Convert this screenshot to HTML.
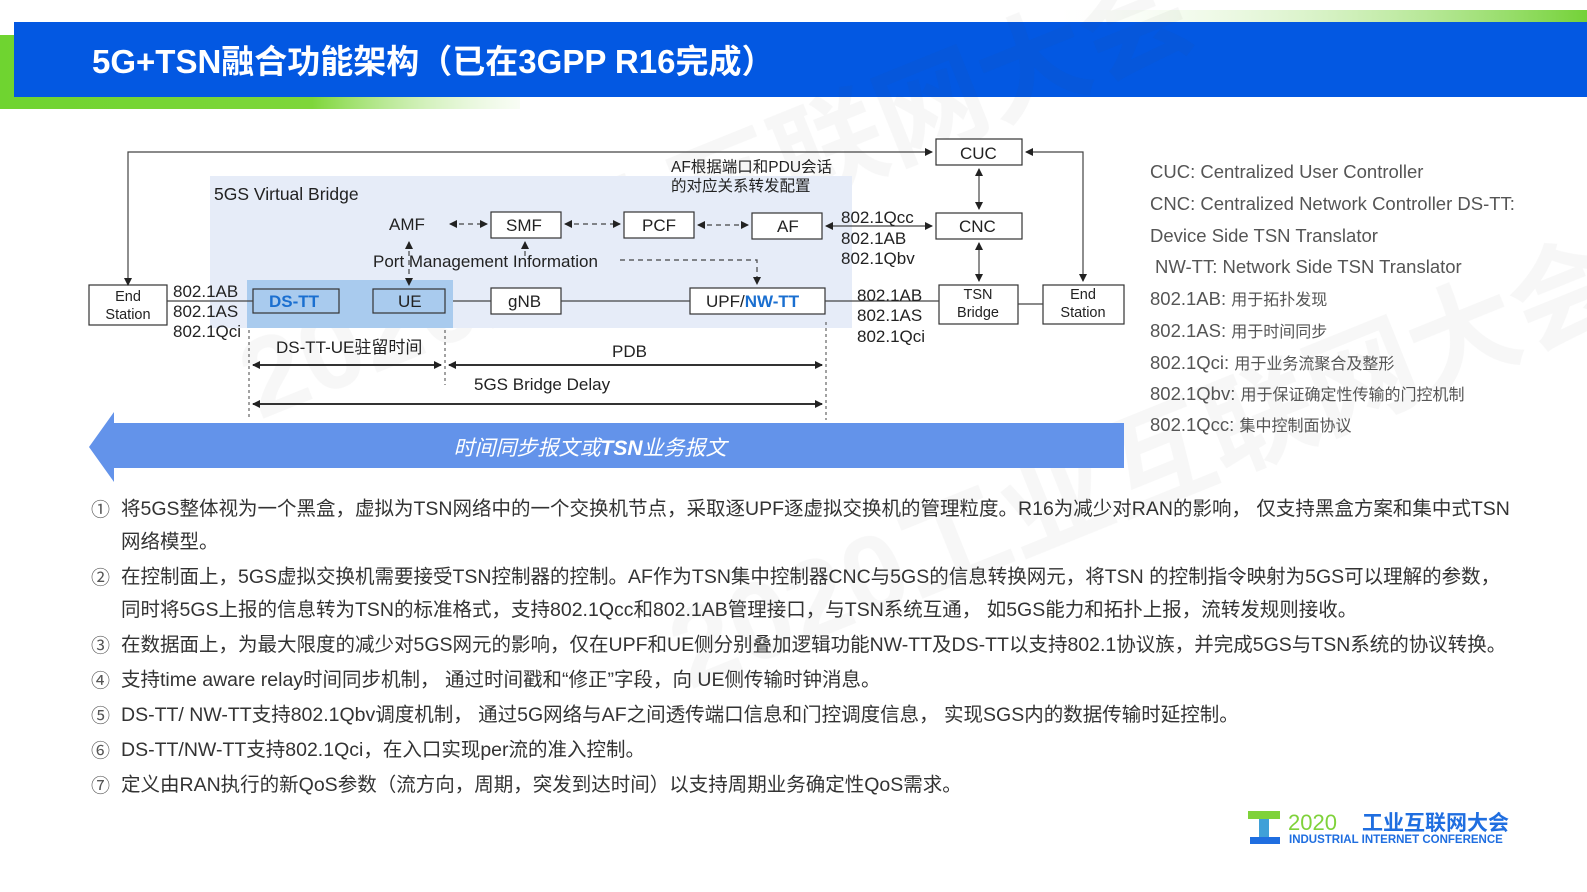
<!DOCTYPE html>
<html><head><meta charset="utf-8"><style>
html,body{margin:0;padding:0;background:#fff;width:1587px;height:892px;overflow:hidden}
svg{display:block}
text{font-family:"Liberation Sans","Noto Sans CJK SC",sans-serif}
</style></head><body>
<svg width="1587" height="892" viewBox="0 0 1587 892" xmlns="http://www.w3.org/2000/svg">
<defs>
<linearGradient id="g1" x1="0" x2="1"><stop offset="0" stop-color="#6fd430"/><stop offset="0.6" stop-color="#7ed63a"/><stop offset="1" stop-color="#e8f7dc" stop-opacity="0.3"/></linearGradient>
<linearGradient id="g2" x1="0" x2="1"><stop offset="0" stop-color="#e8f7dc" stop-opacity="0"/><stop offset="1" stop-color="#74d238"/></linearGradient>
<marker id="a" markerWidth="8" markerHeight="8" refX="7" refY="4" orient="auto-start-reverse" markerUnits="userSpaceOnUse"><path d="M0,0 L8,4 L0,8 z" fill="#222"/></marker>
</defs>
<rect x="1060" y="10" width="527" height="14" fill="url(#g2)"/>
<rect x="0" y="35" width="520" height="74" fill="url(#g1)"/>
<rect x="14" y="22" width="1573" height="75" fill="#0358e2"/>
<text x="92" y="73" font-size="33" font-weight="bold" fill="#fff">5G+TSN融合功能架构（已在3GPP R16完成）</text>

<g opacity="0.05" fill="#555" font-weight="bold">
<text x="260" y="420" font-size="110" transform="rotate(-22 260 420)">2020工业互联网大会</text>
<text x="690" y="690" font-size="110" transform="rotate(-22 690 690)">2020工业互联网大会</text>
</g>

<rect x="210" y="176" width="642" height="152" fill="#e6ecf8"/>
<rect x="247" y="280" width="206" height="48" fill="#a9cbee"/>
<g fill="none" stroke="#333" stroke-width="1.2">
<rect x="89" y="285" width="78" height="40" fill="#fff"/>
<rect x="253" y="289" width="86" height="24" fill="#a9cbee"/>
<rect x="373" y="289" width="72" height="24" fill="#a9cbee"/>
<rect x="491" y="288" width="70" height="26" fill="#fff"/>
<rect x="690" y="288" width="135" height="26" fill="#fff"/>
<rect x="491" y="212" width="70" height="26" fill="#fff"/>
<rect x="624" y="212" width="70" height="26" fill="#fff"/>
<rect x="752" y="213" width="70" height="26" fill="#fff"/>
<rect x="936" y="139" width="86" height="26" fill="#fff"/>
<rect x="936" y="213" width="86" height="26" fill="#fff"/>
<rect x="939" y="285" width="79" height="39" fill="#fff"/>
<rect x="1043" y="285" width="81" height="39" fill="#fff"/>
</g>
<g stroke="#444" stroke-width="1.2" fill="none">
<line x1="167" y1="301" x2="253" y2="301"/>
<line x1="453" y1="301" x2="491" y2="301"/>
<line x1="561" y1="301" x2="690" y2="301"/>
<line x1="825" y1="301" x2="939" y2="301"/>
<line x1="1018" y1="304" x2="1043" y2="304"/>
<polyline points="128,285 128,152 932,152" marker-start="url(#a)" marker-end="url(#a)"/>
<polyline points="1026,152 1083,152 1083,281" marker-start="url(#a)" marker-end="url(#a)"/>
<line x1="979" y1="169" x2="979" y2="209" marker-start="url(#a)" marker-end="url(#a)"/>
<line x1="979" y1="243" x2="979" y2="281" marker-start="url(#a)" marker-end="url(#a)"/>
<line x1="826" y1="226" x2="932" y2="226" marker-start="url(#a)" marker-end="url(#a)"/>
</g>
<g stroke="#444" stroke-width="1.2" fill="none" stroke-dasharray="5,4">
<line x1="450" y1="224" x2="487" y2="224" marker-start="url(#a)" marker-end="url(#a)"/>
<line x1="565" y1="224" x2="620" y2="224" marker-start="url(#a)" marker-end="url(#a)"/>
<line x1="698" y1="225" x2="748" y2="225" marker-start="url(#a)" marker-end="url(#a)"/>
<line x1="409" y1="242" x2="409" y2="285" marker-start="url(#a)" marker-end="url(#a)"/>
<line x1="525" y1="242" x2="525" y2="258" marker-start="url(#a)"/>
<polyline points="620,260 757,260 757,284" marker-end="url(#a)"/>
</g>
<g stroke="#444" stroke-width="1" stroke-dasharray="3,3">
<line x1="249" y1="330" x2="249" y2="420"/>
<line x1="445" y1="330" x2="445" y2="385"/>
<line x1="826" y1="322" x2="826" y2="420"/>
</g>
<g stroke="#333" stroke-width="2">
<line x1="253" y1="365" x2="441" y2="365" marker-start="url(#a)" marker-end="url(#a)"/>
<line x1="449" y1="365" x2="822" y2="365" marker-start="url(#a)" marker-end="url(#a)"/>
<line x1="253" y1="404" x2="822" y2="404" marker-start="url(#a)" marker-end="url(#a)"/>
</g>
<g font-size="17" fill="#222">
<text x="214" y="200" font-size="17.5">5GS Virtual Bridge</text>
<text x="389" y="230">AMF</text>
<text x="506" y="231">SMF</text>
<text x="642" y="231">PCF</text>
<text x="777" y="232">AF</text>
<text x="960" y="159">CUC</text>
<text x="959" y="232">CNC</text>
<text x="373" y="267">Port Management Information</text>
<text x="671" y="172" font-size="15.5">AF根据端口和PDU会话</text>
<text x="671" y="191" font-size="15.5">的对应关系转发配置</text>
<text x="841" y="223">802.1Qcc</text>
<text x="841" y="244">802.1AB</text>
<text x="841" y="264">802.1Qbv</text>
<text x="128" y="301" font-size="14.5" text-anchor="middle">End</text>
<text x="128" y="319" font-size="14.5" text-anchor="middle">Station</text>
<text x="173" y="297">802.1AB</text>
<text x="173" y="317">802.1AS</text>
<text x="173" y="337">802.1Qci</text>
<text x="269" y="307" font-weight="bold" fill="#1a6fd0">DS-TT</text>
<text x="398" y="307">UE</text>
<text x="508" y="307">gNB</text>
<text x="706" y="307">UPF/<tspan fill="#1a6fd0" font-weight="bold">NW-TT</tspan></text>
<text x="857" y="301">802.1AB</text>
<text x="857" y="321">802.1AS</text>
<text x="857" y="342">802.1Qci</text>
<text x="978" y="299" font-size="14.5" text-anchor="middle">TSN</text>
<text x="978" y="317" font-size="14.5" text-anchor="middle">Bridge</text>
<text x="1083" y="299" font-size="14.5" text-anchor="middle">End</text>
<text x="1083" y="317" font-size="14.5" text-anchor="middle">Station</text>
<text x="276" y="353">DS-TT-UE驻留时间</text>
<text x="612" y="357">PDB</text>
<text x="474" y="390">5GS Bridge Delay</text>
</g>
<g font-size="18.5" fill="#555">
<text x="1150" y="178">CUC: Centralized User Controller</text>
<text x="1150" y="210">CNC: Centralized Network Controller  DS-TT:</text>
<text x="1150" y="242">Device Side TSN Translator</text>
<text x="1155" y="273">NW-TT: Network Side TSN Translator</text>
<text x="1150" y="305">802.1AB:  <tspan font-size="16">用于拓扑发现</tspan></text>
<text x="1150" y="337">802.1AS:  <tspan font-size="16">用于时间同步</tspan></text>
<text x="1150" y="369">802.1Qci:  <tspan font-size="16">用于业务流聚合及整形</tspan></text>
<text x="1150" y="400">802.1Qbv:  <tspan font-size="16">用于保证确定性传输的门控机制</tspan></text>
<text x="1150" y="431">802.1Qcc:  <tspan font-size="16">集中控制面协议</tspan></text>
</g>
<path d="M89,447 L114,412 L114,423 L1124,423 L1124,468 L114,468 L114,482 z" fill="#6393ea"/>
<text x="590" y="455" font-size="21" fill="#fff" font-style="italic" text-anchor="middle">时间同步报文或<tspan font-weight="bold">TSN</tspan>业务报文</text>
<g font-size="19" fill="#555">
<text x="91" y="516">①</text><text x="91" y="584">②</text><text x="91" y="652">③</text><text x="91" y="687">④</text><text x="91" y="722">⑤</text><text x="91" y="757">⑥</text><text x="91" y="792">⑦</text>
</g>
<g font-size="19.5" fill="#333">
<text x="121" y="515">将5GS整体视为一个黑盒，虚拟为TSN网络中的一个交换机节点，采取逐UPF逐虚拟交换机的管理粒度。R16为减少对RAN的影响， 仅支持黑盒方案和集中式TSN</text>
<text x="121" y="548">网络模型。</text>
<text x="121" y="583">在控制面上，5GS虚拟交换机需要接受TSN控制器的控制。AF作为TSN集中控制器CNC与5GS的信息转换网元，将TSN 的控制指令映射为5GS可以理解的参数，</text>
<text x="121" y="616">同时将5GS上报的信息转为TSN的标准格式，支持802.1Qcc和802.1AB管理接口，与TSN系统互通， 如5GS能力和拓扑上报，流转发规则接收。</text>
<text x="121" y="651">在数据面上，为最大限度的减少对5GS网元的影响，仅在UPF和UE侧分别叠加逻辑功能NW-TT及DS-TT以支持802.1协议族，并完成5GS与TSN系统的协议转换。</text>
<text x="121" y="686">支持time aware relay时间同步机制， 通过时间戳和“修正”字段，向 UE侧传输时钟消息。</text>
<text x="121" y="721">DS-TT/ NW-TT支持802.1Qbv调度机制， 通过5G网络与AF之间透传端口信息和门控调度信息， 实现SGS内的数据传输时延控制。</text>
<text x="121" y="756">DS-TT/NW-TT支持802.1Qci，在入口实现per流的准入控制。</text>
<text x="121" y="791">定义由RAN执行的新QoS参数（流方向，周期，突发到达时间）以支持周期业务确定性QoS需求。</text>
</g>
<rect x="1248" y="811" width="32" height="8" fill="#7fd23a"/>
<rect x="1259" y="819" width="10" height="18" fill="#3fa0d8"/>
<rect x="1250" y="837" width="30" height="7" fill="#1f6ee0"/>
<text x="1288" y="830" font-size="22" fill="#7fd23a">2020</text>
<text x="1362" y="830" font-size="21" font-weight="bold" fill="#1f6ee0">工业互联网大会</text>
<text x="1289" y="843" font-size="11.5" font-weight="bold" fill="#1f6ee0">INDUSTRIAL INTERNET CONFERENCE</text>
</svg>
</body></html>
